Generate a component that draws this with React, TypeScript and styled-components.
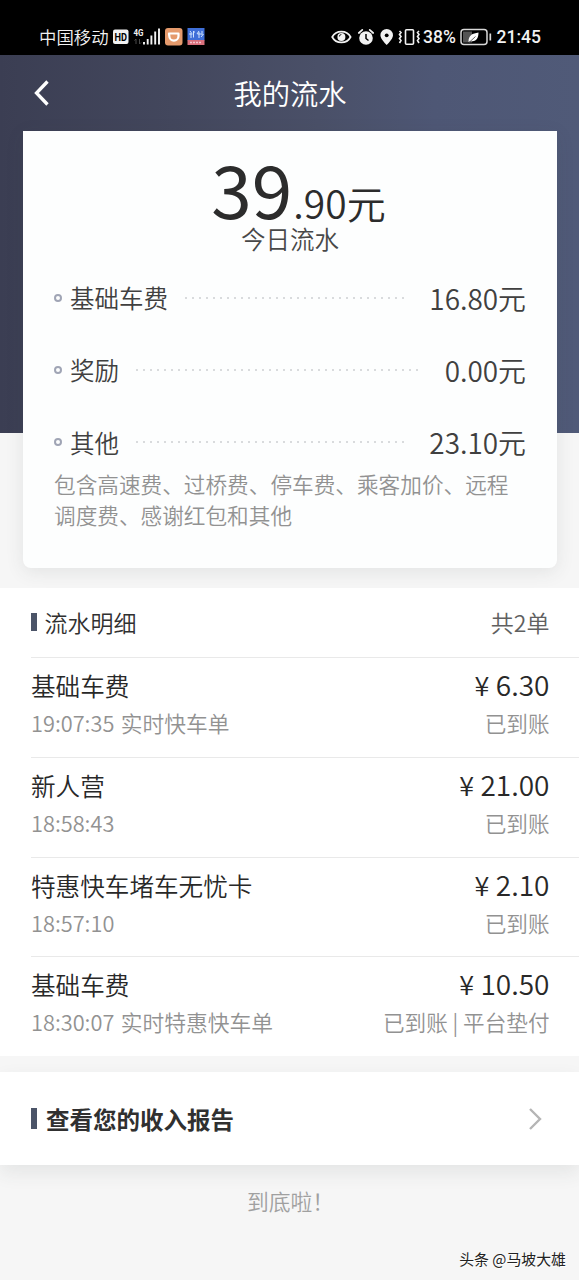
import React from "react";
import styled, { createGlobalStyle, css } from "styled-components";

const GlobalStyle = createGlobalStyle`
  * { box-sizing: border-box; }
  body {
    margin: 0;
    background: #f6f6f6;
    font-family: "Noto Sans CJK SC DemiLight", "Noto Sans CJK SC", sans-serif;
    font-weight: 350;
    color: #303030;
  }
`;

const Screen = styled.div`
  width: 579px;
  height: 1280px;
  overflow: hidden;
  background: #f6f6f6;
  display: flex;
  flex-direction: column;
`;

const StatusBar = styled.header`
  flex: none;
  height: 55px;
  background: #000;
  color: #f2f2f2;
  display: flex;
  justify-content: space-between;
  padding: 20px 36.5px 0 39px;
`;

const StatusGroup = styled.div`
  display: flex;
  align-items: center;
  height: 33px;
`;

const Carrier = styled.span`
  font-size: 17.4px;
  line-height: 33px;
  margin-right: 4px;
`;

const StatusText = styled.span<{ $width: number }>`
  width: ${(p) => p.$width}px;
  padding-top: 2px;
  font-family: Roboto, sans-serif;
  font-weight: 500;
  font-size: 17.5px;
  line-height: 31px;
  white-space: nowrap;
`;

const Hero = styled.section`
  flex: none;
  height: 533px;
  padding: 0 22px 0 23px;
  background: linear-gradient(90deg, #3b3e53 0%, #43475d 30%, #4a5068 55%, #4e5775 75%, #505a78 100%) top / 100% 378px no-repeat;
`;

const NavBar = styled.nav`
  height: 76px;
  display: grid;
  grid-template-columns: 60px 1fr 60px;
  align-items: center;
`;

const BackButton = styled.button`
  border: 0;
  padding: 0 0 0 10px;
  background: none;
  display: flex;
`;

const PageTitle = styled.h1`
  margin: 0;
  text-align: center;
  font-size: 28.3px;
  line-height: 40px;
  font-weight: inherit;
  color: #fff;
`;

const Card = styled.div`
  height: 437px;
  background: #fdfefe;
  border-radius: 0 0 8px 8px;
  box-shadow: 0 4px 18px rgba(60, 64, 70, 0.1);
  padding: 20px 31px 0 31px;
`;

const Total = styled.div`
  display: flex;
  align-items: baseline;
  justify-content: center;
  height: 77px;
  padding-left: 17px;
  line-height: 73px;
  color: #2c2c2c;
`;

const TotalMajor = styled.span`
  font-family: "Noto Sans CJK SC", sans-serif;
  font-size: 73px;
  font-weight: 400;
`;

const TotalMinor = styled.span`
  margin-left: 1px;
  font-size: 39px;
`;

const TotalLabel = styled.div`
  text-align: center;
  font-size: 24.5px;
  line-height: 22px;
  color: #484848;
`;

const FeeList = styled.div`
  margin-top: 12px;
`;

const FeeRow = styled.div`
  display: flex;
  align-items: center;
  height: 72.3px;
  color: #404040;
`;

const Bullet = styled.i`
  width: 8px;
  height: 8px;
  margin: 0 8px 1px 0;
  border: 2px solid #a0a5b5;
  border-radius: 50%;
`;

const FeeName = styled.span`
  font-size: 24.5px;
  line-height: 36px;
`;

const Dots = styled.i`
  flex: 1;
  height: 2px;
  margin: 0 24px 1px 17px;
  background: radial-gradient(circle at 1px 1px, #d9dbdd 0.8px, transparent 1.3px) 0 0 / 7px 2px repeat-x;
`;

const FeeAmount = styled.span`
  font-size: 27.9px;
  line-height: 36px;
  padding-bottom: 1px;
`;

const FeeNote = styled.p`
  margin: -11px 0 0;
  font-size: 21.65px;
  line-height: 31px;
  color: #929292;
`;

const panel = css`
  flex: none;
  background: #fff;
`;

const Details = styled.section`
  ${panel}
  height: 468px;
  padding-left: 31px;
`;

const DetailsHeader = styled.div`
  height: 69px;
  padding: 0 29.5px 2px 0;
  display: flex;
  align-items: center;
  font-size: 23px;
`;

const Marker = styled.i<{ $height: number; $gap: number }>`
  width: 6px;
  height: ${(p) => p.$height}px;
  margin-right: ${(p) => p.$gap}px;
  background: #4b5468;
`;

const DetailsTitle = styled.h2`
  margin: 0;
  flex: 1;
  font-size: 23px;
  line-height: 36px;
  font-weight: inherit;
`;

const Count = styled.span`
  color: #606060;
`;

const Entry = styled.article`
  height: 99.75px;
  padding: 8px 29.5px 0 0;
  border-top: 1px solid #e9e9e9;
`;

const EntryLine = styled.div<{ $muted?: boolean }>`
  display: flex;
  justify-content: space-between;
  align-items: baseline;
  height: 38px;
  line-height: ${(p) => (p.$muted ? 38 : 36)}px;
  font-size: ${(p) => (p.$muted ? 21.6 : 24.6)}px;
  color: ${(p) => (p.$muted ? "#929292" : "#282828")};
`;

const EntryTime = styled.span`
  font-size: 21.75px;
  word-spacing: 1.5px;
`;

const Price = styled.span`
  font-size: 28px;
`;

const Yen = styled.span`
  font-size: 27px;
  margin-right: 6.5px;
`;

const ReportLink = styled.section`
  ${panel}
  height: 93px;
  margin-top: 16px;
  padding: 0 37px 0 31px;
  display: flex;
  align-items: center;
  box-shadow: 0 8px 18px rgba(60, 64, 70, 0.09);
`;

const ReportTitle = styled.h2`
  margin: 0;
  flex: 1;
  font-family: "Noto Sans CJK SC", sans-serif;
  font-size: 23.5px;
  line-height: 36px;
  font-weight: 700;
`;

const Footer = styled.footer`
  flex: 1;
  display: flex;
  flex-direction: column;
  justify-content: space-between;
`;

const EndText = styled.div`
  margin-top: 19px;
  padding-left: 2px;
  text-align: center;
  font-size: 21.8px;
  line-height: 34px;
  color: #a0a0a0;
`;

const Credit = styled.div`
  padding: 0 13px 9px 0;
  text-align: right;
  font-family: "Noto Sans CJK SC", sans-serif;
  font-size: 14.9px;
  line-height: 24px;
  font-weight: 400;
  color: #222;
  text-shadow: 1px 1px 0 #fff;
`;

const fees = [
  { name: "基础车费", amount: "16.80元" },
  { name: "奖励", amount: "0.00元" },
  { name: "其他", amount: "23.10元" },
];

const entries = [
  { name: "基础车费", price: "6.30", time: "19:07:35 实时快车单", state: "已到账" },
  { name: "新人营", price: "21.00", time: "18:58:43", state: "已到账" },
  { name: "特惠快车堵车无忧卡", price: "2.10", time: "18:57:10", state: "已到账" },
  { name: "基础车费", price: "10.50", time: "18:30:07 实时特惠快车单", state: "已到账 | 平台垫付" },
];

const LeftIcons = () => (
  <svg width="93" height="20" viewBox="0 0 93 20">
    <rect x="0" y="2.500" width="15.500" height="14.500" rx="2" fill="#f2f2f2" />
    <text x="7.800" y="13.700" textAnchor="middle" fontFamily="Roboto" fontWeight="700" fontSize="10.500" textLength="12.500" lengthAdjust="spacingAndGlyphs" fill="#000">HD</text>
    <text x="20.500" y="8.800" fontFamily="Roboto" fontWeight="700" fontSize="9.500" textLength="10" lengthAdjust="spacingAndGlyphs" fill="#f2f2f2">4G</text>
    <path d="M23 12v5m-1.500-3.500L23 12m3.500 0v5m1.500-1.500L26.500 17" stroke="#4a4a4a" fill="none" />
    <path d="M31 15v2.500M34.700 12v5.500M38.400 8.500v9M42.200 4.500v13M46 1.500v16" stroke="#f2f2f2" strokeWidth="1.900" />
    <rect x="52" y="1" width="17.500" height="17.500" rx="3" fill="#e59a6c" />
    <path d="M56 6.500h9.500v2.500a4.600 4.600 0 0 1-9.200 0z" fill="none" stroke="#fff" strokeWidth="2.200" strokeLinejoin="round" />
    <rect x="74.500" y="1" width="17" height="12.500" fill="#3f6fd8" />
    <rect x="74.500" y="13" width="17" height="5" fill="#d9707c" />
    <path d="M77 4l1.500 2M76 7h3.500M78 6v5M80.500 4v6.500M82 5h-2M84 7l2-3M84.500 7h4M86 5v6M89 4v4M88 10l2.500-3" stroke="#cfe4ff" strokeWidth="1" fill="none" />
    <path d="M77 15.500h12" stroke="#f3c4cc" strokeWidth="1.500" strokeDasharray="2 1" />
  </svg>
);

const StatusIcons = styled.svg`
  margin-right: 2.5px;
`;

const RightIcons = () => (
  <StatusIcons width="90" height="20" viewBox="0 0 90 20">
    <path d="M1.200 10C5 2.800 15.800 2.800 19.600 10 15.800 17.200 5 17.200 1.200 10z" fill="none" stroke="#f2f2f2" strokeWidth="1.700" />
    <circle cx="10.400" cy="10" r="4" fill="#f2f2f2" />
    <path d="M8.400 9.500a2 2 0 0 1 2-2" stroke="#222" fill="none" />
    <circle cx="35" cy="11" r="6.800" fill="#f2f2f2" />
    <path d="M27.800 6l3.500-3.200M42.200 6l-3.500-3.200" stroke="#f2f2f2" strokeWidth="1.700" strokeLinecap="round" />
    <path d="M35 7v4.500l2.500 2" stroke="#000" strokeWidth="1.500" fill="none" />
    <path d="M55.700 2a6.300 6.300 0 0 1 6.300 6.300c0 4-6.300 9.700-6.300 9.700s-6.300-5.700-6.300-9.700A6.300 6.300 0 0 1 55.700 2z" fill="#f2f2f2" />
    <circle cx="55.700" cy="8.300" r="1.900" fill="#000" />
    <rect x="74.500" y="2.700" width="8" height="14.600" rx="1" fill="none" stroke="#f2f2f2" strokeWidth="1.600" />
    <path d="M68.500 4l1.500 1.500-1.500 2 1.500 2-1.500 2 1.500 2-1.500 2.500M88 4l-1.500 1.500 1.500 2-1.500 2 1.500 2-1.500 2L88 16" fill="none" stroke="#f2f2f2" strokeWidth="1.600" />
  </StatusIcons>
);

const BatteryIcon = styled.svg`
  margin-right: 5px;
`;

const Battery = () => (
  <BatteryIcon width="32" height="18" viewBox="0 0 32 18">
    <rect x="1" y="1.500" width="26" height="15" rx="3" fill="none" stroke="#d8d8d8" strokeWidth="1.500" />
    <rect x="3" y="3.500" width="9" height="11" fill="#555" />
    <path d="M8.500 14c0-7 4-8.500 10-9.500 0 5.500-2.500 10-8 8.500z" fill="#fff" />
    <path d="M9 14.500l6.500-6" stroke="#555" strokeWidth="0.900" />
    <path d="M30.300 5.500v7" stroke="#d8d8d8" strokeWidth="1.700" />
  </BatteryIcon>
);

export default function App() {
  return (
    <>
      <GlobalStyle />
      <Screen>
        <StatusBar>
          <StatusGroup>
            <Carrier>中国移动</Carrier>
            <LeftIcons />
          </StatusGroup>
          <StatusGroup>
            <RightIcons />
            <StatusText $width={36.5}>38%</StatusText>
            <Battery />
            <StatusText $width={46}>21:45</StatusText>
          </StatusGroup>
        </StatusBar>

        <Hero>
          <NavBar>
            <BackButton aria-label="返回">
              <svg width="18" height="28" viewBox="0 0 18 28">
                <path d="M14.500 2.500L3.500 14l11 11.500" fill="none" stroke="#fff" strokeWidth="3.300" />
              </svg>
            </BackButton>
            <PageTitle>我的流水</PageTitle>
          </NavBar>
          <Card>
            <Total>
              <TotalMajor>39</TotalMajor>
              <TotalMinor>.90元</TotalMinor>
            </Total>
            <TotalLabel>今日流水</TotalLabel>
            <FeeList>
              {fees.map((fee) => (
                <FeeRow key={fee.name}>
                  <Bullet />
                  <FeeName>{fee.name}</FeeName>
                  <Dots />
                  <FeeAmount>{fee.amount}</FeeAmount>
                </FeeRow>
              ))}
            </FeeList>
            <FeeNote>包含高速费、过桥费、停车费、乘客加价、远程调度费、感谢红包和其他</FeeNote>
          </Card>
        </Hero>

        <Details>
          <DetailsHeader>
            <Marker $height={18} $gap={7.5} />
            <DetailsTitle>流水明细</DetailsTitle>
            <Count>共2单</Count>
          </DetailsHeader>
          {entries.map((entry) => (
            <Entry key={entry.time}>
              <EntryLine>
                <span>{entry.name}</span>
                <Price>
                  <Yen>¥</Yen>
                  {entry.price}
                </Price>
              </EntryLine>
              <EntryLine $muted>
                <EntryTime>{entry.time}</EntryTime>
                <span>{entry.state}</span>
              </EntryLine>
            </Entry>
          ))}
        </Details>

        <ReportLink>
          <Marker $height={21} $gap={9} />
          <ReportTitle>查看您的收入报告</ReportTitle>
          <svg width="14" height="24" viewBox="0 0 14 24">
            <path d="M2 2l10 10L2 22" fill="none" stroke="#b5b5b5" strokeWidth="2.400" />
          </svg>
        </ReportLink>

        <Footer>
          <EndText>到底啦！</EndText>
          <Credit>头条 @马坡大雄</Credit>
        </Footer>
      </Screen>
    </>
  );
}
